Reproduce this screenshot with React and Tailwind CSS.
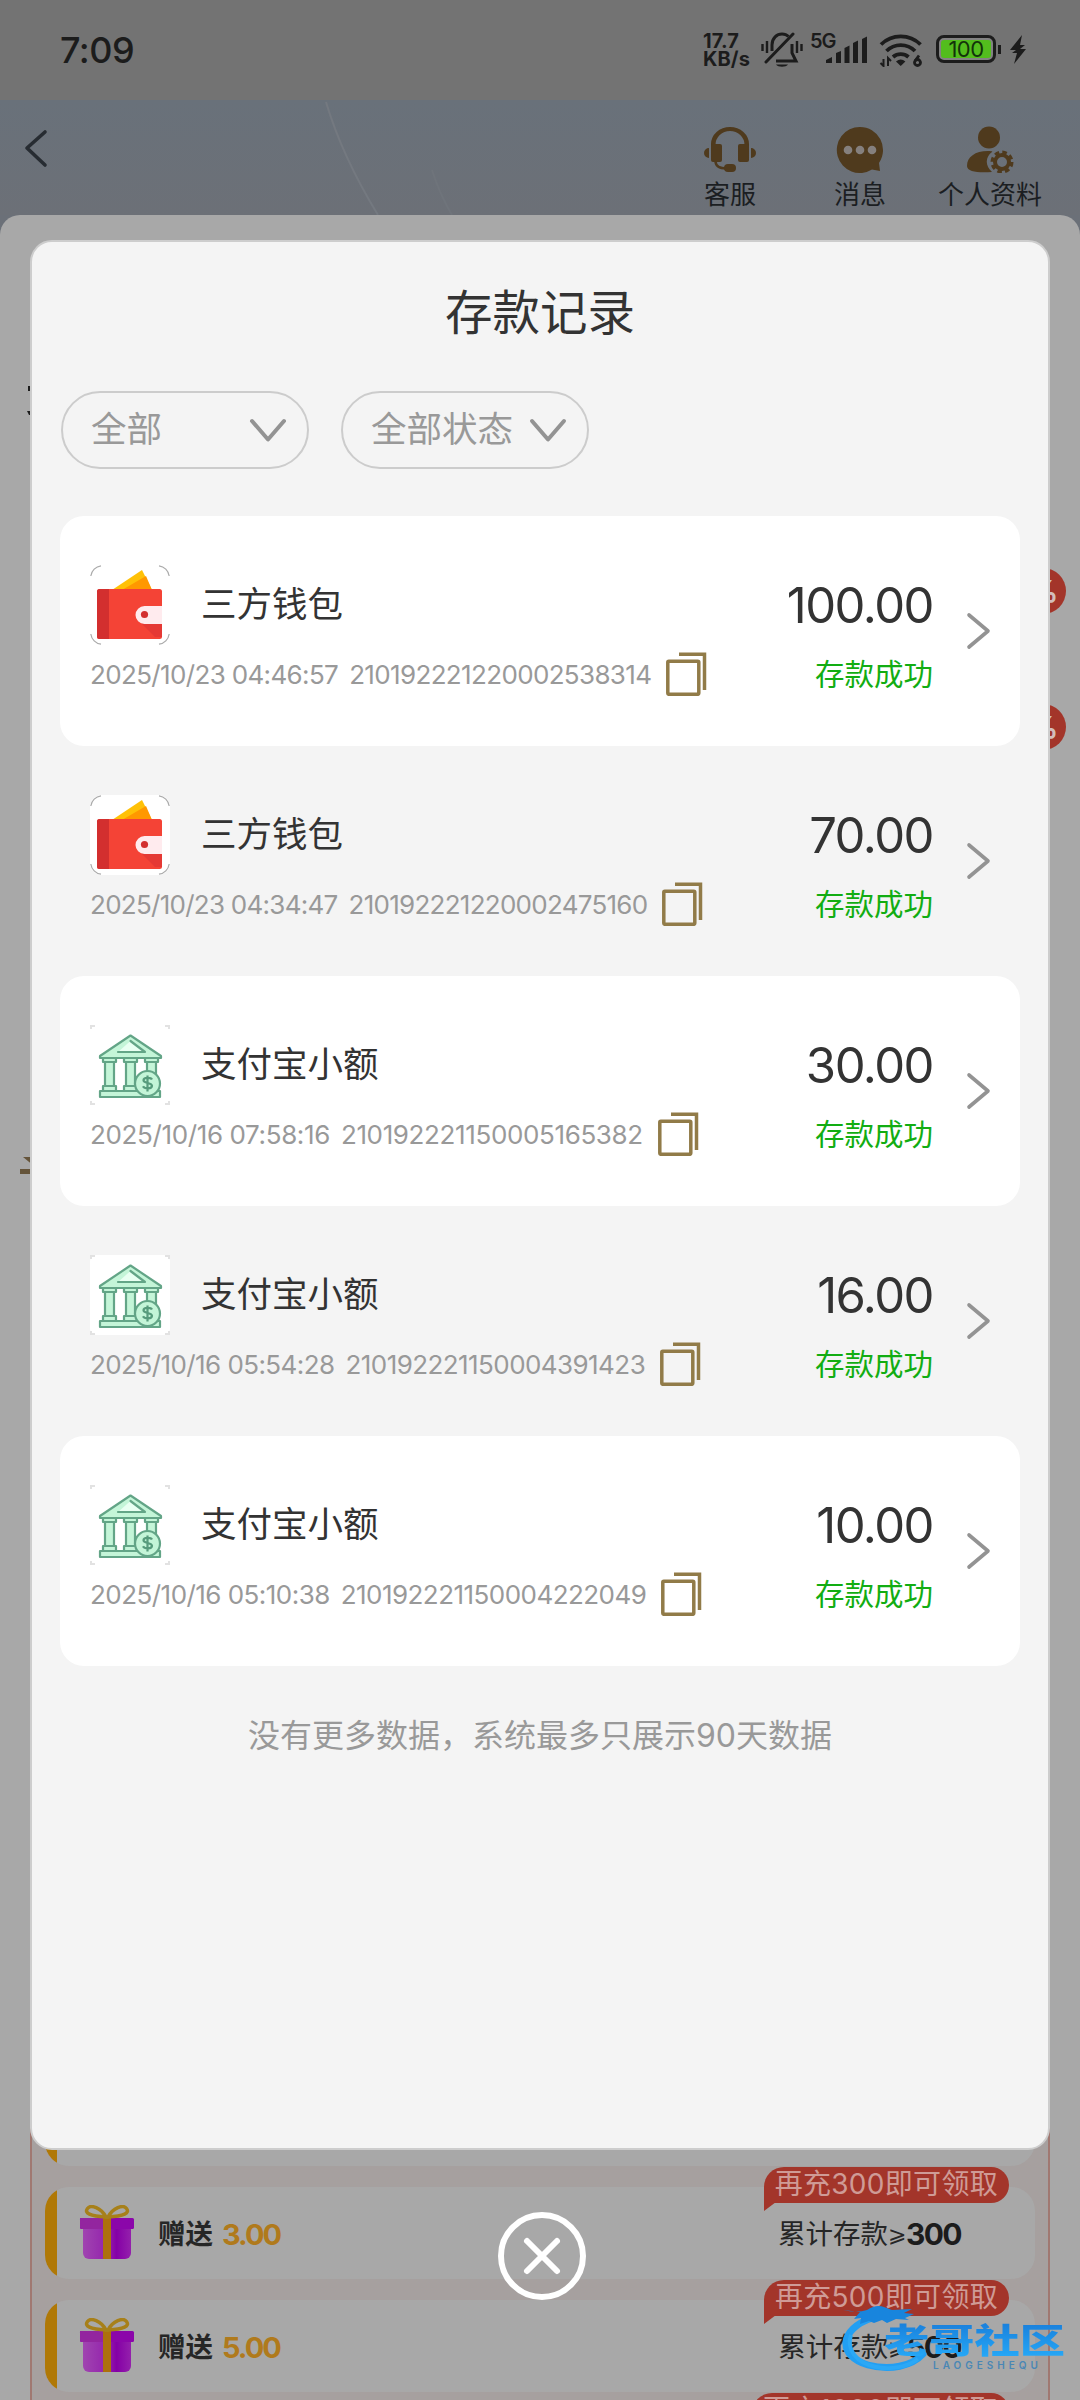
import React, { useState } from "react";

const records = [
  { type: "wallet", name: "三方钱包", time: "2025/10/23 04:46:57", order: "210192221220002538314", amount: "100.00", tracking: "tracking-[-0.65px]" },
  { type: "wallet", name: "三方钱包", time: "2025/10/23 04:34:47", order: "210192221220002475160", amount: "70.00", tracking: "tracking-[-0.73px]" },
  { type: "bank", name: "支付宝小额", time: "2025/10/16 07:58:16", order: "210192221150005165382", amount: "30.00", tracking: "tracking-[-0.37px]" },
  { type: "bank", name: "支付宝小额", time: "2025/10/16 05:54:28", order: "210192221150004391423", amount: "16.00", tracking: "tracking-[-0.57px]" },
  { type: "bank", name: "支付宝小额", time: "2025/10/16 05:10:38", order: "210192221150004222049", amount: "10.00", tracking: "tracking-[-0.54px]" },
];

const bonuses = [
  { id: 1, gift: "", need: "" },
  { id: 2, gift: "3.00", need: "300" },
  { id: 3, gift: "5.00", need: "500" },
  { id: 4, gift: "", need: "1000" },
];

function WalletIcon() {
  return (
    <svg width="80" height="80" viewBox="0 0 80 80">
      <rect width="80" height="80" rx="12" fill="#fff" />
      <g fill="none" stroke="#aaa" strokeWidth="1.2">
        <path d="M.8 11A12 12 0 0 1 11 .8" />
        <path d="M69 .8A12 12 0 0 1 79.2 11" />
        <path d="M79.2 69A12 12 0 0 1 69 79.2" />
        <path d="M11 79.2A12 12 0 0 1 .8 69" />
      </g>
      <path d="M22 25 52 5l10 20z" fill="#ffc107" />
      <path d="M32 25 56 11l6 14z" fill="#ff9800" />
      <rect x="7" y="24" width="65" height="50" rx="2.5" fill="#f44336" />
      <path d="M9.500 24H19v50H9.500A2.500 2.500 0 0 1 7 71.500v-45A2.500 2.500 0 0 1 9.500 24z" fill="#d32f2f" />
      <path d="M51 58l14 14h7V58z" fill="#e53935" />
      <path d="M72 41H54.500a9 9 0 0 0 0 18H72z" fill="#ffebee" />
      <circle cx="54.500" cy="49.500" r="3.600" fill="#d32f2f" />
    </svg>
  );
}

function BankIcon() {
  return (
    <svg width="80" height="80" viewBox="0 0 80 80">
      <rect width="80" height="80" rx="6" fill="#fff" />
      <g stroke="#e2e2e2" strokeWidth="2" fill="none">
        <path d="M1 4V1h4M75 1h4v3M79 76v3h-4M5 79H1v-3" />
      </g>
      <g fill="#c4f5d8" stroke="#63a587" strokeWidth="2.200" strokeLinejoin="round" strokeLinecap="round">
        <path d="M40.500 10.500 71 31v2H10v-2z" />
        <path d="M28 27h27L40.500 16" fill="#e9fff2" />
        <path d="M15 37h9v24h-9zM36 37h9v24h-9zM57 37h9v20h-9z" />
        <path d="M13 33h13v4H13zM34 33h13v4H34zM55 33h13v4H55z" />
        <path d="M13 61h13v5H13zM34 61h13v5H34z" />
        <path d="M10 66h60v6H10z" />
        <circle cx="57.500" cy="58.500" r="12.500" />
      </g>
      <path d="M62 54.500c-1-2-8.500-2.500-8.500.8s8.500 2 8.500 5.500-7.500 3.300-9 .5M57.500 50.500v16" fill="none" stroke="#579b7c" strokeWidth="2.200" />
    </svg>
  );
}

function CopyIcon() {
  return (
    <svg width="41" height="44" viewBox="0 0 41 44" fill="none" stroke="#917b48" strokeWidth="3.500">
      <rect x="1.800" y="9.300" width="31" height="33" rx="1" />
      <path d="M13 2.200h25.500V38" />
    </svg>
  );
}

function GiftIcon() {
  return (
    <svg width="56" height="56" viewBox="0 0 56 56">
      <defs>
        <linearGradient id="giftBox">
          <stop offset="0" stopColor="#a045b0" />
          <stop offset=".5" stopColor="#9423ad" />
          <stop offset=".7" stopColor="#8500a6" />
          <stop offset="1" stopColor="#9420ac" />
        </linearGradient>
      </defs>
      <path d="M4 22h48v26a6 6 0 0 1-6 6H10a6 6 0 0 1-6-6z" fill="url(#giftBox)" />
      <rect x="1" y="13" width="54" height="11" rx="1.500" fill="#8b06aa" />
      <path d="M1 13h23v11H3a2 2 0 0 1-2-2z" fill="#93259f" />
      <path d="M24 12h8v42h-8z" fill="#ad700d" />
      <g fill="none" stroke="#a7801a" strokeWidth="3.500">
        <path d="M27 12C22 3 12-1 8.500 3.500S11 11 27 12z" />
        <path d="M29 12C34 3 44-1 47.500 3.500S45 11 29 12z" />
      </g>
    </svg>
  );
}

function StatusBar() {
  return (
    <div className="flex h-[100px] items-start bg-[#737373] pl-[60px] text-[#1c1c1c]">
      <div className="mt-[29px] w-[643px] text-[36px] leading-[42px] font-medium tracking-[-0.5px]">7:09</div>
      <div className="mt-[32px] w-[58px] text-[20px] leading-[18px] font-bold tracking-[0.1px]">
        <div>17.7</div>
        <div>KB/s</div>
      </div>
      <svg className="mt-[32px]" width="42" height="36" viewBox="0 0 42 36" fill="none" stroke="currentColor" strokeWidth="3">
        <path d="M5 30 32 2" strokeLinecap="round" />
        <path d="M11 19v-6c0-7 5-11 10-11 3 0 5 1 6.500 2.500M31 12v9l4 8H15" />
        <path d="M15 32.500h12c-2 3-10 3-12 0z" fill="currentColor" stroke="none" />
        <path d="M1.500 12v7M6 9v12M36 9v12M40.500 12v7" strokeWidth="2.400" />
      </svg>
      <div className="mt-[31px] ml-[7px] w-[16px] text-[20px] leading-[20px] font-semibold tracking-[-1px]">5G</div>
      <svg className="mt-[36px]" width="42" height="28" viewBox="0 0 42 28" fill="currentColor">
        <path d="M0 27v-3l6-3v6zM10 27V17l5-2v12zM18.500 27V12l5-2.500V27zM27 27V7l5-2.500V27zM36 27V3l5-2.500V27z" />
      </svg>
      <svg className="mt-[33px] ml-[11px]" width="44" height="34" viewBox="0 0 44 34" fill="none" stroke="currentColor" strokeWidth="3.800">
        <path d="M2 11.500a28 28 0 0 1 39.500 0M7.500 18a20 20 0 0 1 28.500 0M14 24a12 12 0 0 1 15.500 0" />
        <path d="M17 28.500q4.700-4 9.400 0l-4.700 4.500z" fill="currentColor" stroke="none" />
        <path d="M4.500 26v7l-3-3M9 33v-8l3 3" strokeWidth="2" />
        <path d="M40 22.500l-4 5.500" strokeWidth="2.800" />
        <circle cx="38.500" cy="29.500" r="3" strokeWidth="2.800" />
      </svg>
      <div className="mt-[35px] ml-[13px] flex h-[28px] w-[60px] items-center justify-center rounded-[8px] border-[3px] border-[#1c1c1c] bg-[#828282] p-[2px]">
        <div className="flex h-full w-full items-center justify-center rounded-[3px] bg-[#53bd1d] text-[22px] leading-none tracking-[-0.5px] text-[#12330a]">100</div>
      </div>
      <div className="mt-[45px] ml-[2px] h-[9px] w-[3px] bg-[#1c1c1c]"></div>
      <svg className="mt-[35px] ml-[9px]" width="17" height="30" viewBox="0 0 17 30" fill="currentColor">
        <path d="M12 0 0 15h6l-4 3h5l-3 11 12-15h-6l5-4h-5z" />
      </svg>
    </div>
  );
}

function Header() {
  return (
    <div className="relative flex h-[115px] justify-between">
      <svg className="absolute top-0 left-[320px]" width="140" height="115" viewBox="0 0 140 115" fill="none" stroke="#747980" strokeWidth="2">
        <path d="M6 2Q22 56 58 115" />
        <path d="M112 70q8 25 20 45" stroke="#6f747b" />
      </svg>
      <svg className="mt-[28px] ml-[23px]" width="26" height="40" viewBox="0 0 26 40" fill="none" stroke="#272c32" strokeWidth="3.600" strokeLinecap="round" strokeLinejoin="round">
        <path d="M22 4 4 20l18 17" />
      </svg>
      <div className="flex pt-[26px] text-center text-[26px] leading-[36px] text-[#1b1e22]">
        <div className="mr-[78px] flex flex-col items-center">
          <svg width="52" height="47" viewBox="0 0 52 47" fill="#4f3a1d">
            <path d="M7 22V18a19 17 0 0 1 38 0v4h-4.500V19a14.500 14 0 0 0-29 0v3z" />
            <rect x="7" y="18" width="11" height="18" rx="2" />
            <rect x="34" y="18" width="11" height="18" rx="2" />
            <path d="M5 22v10a5 5 0 0 1 0-10zM47 22v10a5 5 0 0 0 0-10z" />
            <path d="M11.500 35c0 5 3 7.500 11 7.500" fill="none" stroke="#4f3a1d" strokeWidth="2.500" />
            <rect x="20" y="38" width="12" height="8" rx="4" />
          </svg>
          <span className="mt-[4px]">客服</span>
        </div>
        <div className="mr-[52px] flex flex-col items-center">
          <svg width="48" height="47" viewBox="0 0 48 47">
            <path d="M24 1a23 23 0 1 0 12 42.500L44 45l-1-8A23 23 0 0 0 24 1z" fill="#4f3a1d" />
            <g fill="#85807e">
              <circle cx="12" cy="24" r="4.300" />
              <circle cx="24" cy="24" r="4.300" />
              <circle cx="36" cy="24" r="4.300" />
            </g>
          </svg>
          <span className="mt-[4px]">消息</span>
        </div>
        <div className="mr-[38px] flex flex-col items-center">
          <svg width="48" height="47" viewBox="0 0 48 47" fill="#4f3a1d">
            <circle cx="23" cy="11.500" r="11" />
            <path d="M1 40c0-9 8-15 21-15 3 0 5 .3 4 1-7 5-7 14 0 20-13 1-25 0-25-6z" />
            <circle cx="36" cy="36" r="7" fill="none" stroke="#4f3a1d" strokeWidth="4" />
            <circle cx="36" cy="36" r="9.500" fill="none" stroke="#4f3a1d" strokeWidth="4" strokeDasharray="4.400 3.062" />
          </svg>
          <span className="mt-[4px]">个人资料</span>
        </div>
      </div>
    </div>
  );
}

function BonusRow({ gift, need }) {
  return (
    <div className="relative mb-[21px] ml-[13px] flex h-[92px] w-[990px] shrink-0 items-center rounded-[24px] bg-[#a8a8a8]">
      <div className="h-[92px] w-[12px] overflow-hidden">
        <div className="h-full w-[60px] rounded-[24px] bg-[#b07806]"></div>
      </div>
      {gift && (
        <>
          <div className="ml-[22px]">
            <GiftIcon />
          </div>
          <div className="mt-[3px] ml-[23px] flex items-center text-[27.5px] font-bold text-[#262626]">
            赠送
            <span className="ml-[9px] text-[29px] tracking-[-2px] text-[#b07a1c]">{gift}</span>
          </div>
          <div className="mt-[3px] mr-[74px] ml-auto flex items-center text-[27.5px] text-[#262626]">
            累计存款
            <span className="w-[18px] text-center text-[22px]">⩾</span>
            <b className="text-[30px] tracking-[-1.6px] text-[#1c1c1c]">{need}</b>
          </div>
        </>
      )}
      {need && (
        <div className="absolute -top-[20px] right-[26px] h-[36px] rounded-tl-[20px] rounded-r-[18px] bg-[#a3352a] px-[11px] text-[28px] leading-[34px] tracking-[0.3px] whitespace-nowrap text-[#cf9b96]">
          再充{need}即可领取
          <svg className="absolute top-[35px] left-0" width="12" height="9" viewBox="0 0 12 9" fill="#a3352a">
            <path d="M0 0h12L0 9z" />
          </svg>
        </div>
      )}
    </div>
  );
}

function PercentTag({ className }) {
  return (
    <div className={"mr-[14px] flex size-[46px] shrink-0 items-center justify-center self-end rounded-full bg-[#a3352a] text-[30px] font-bold text-[#d3bdbb] " + className}>
      %
    </div>
  );
}

function Filter({ label }) {
  return (
    <button className="flex h-[78px] w-[248px] items-center justify-between rounded-full border-2 border-[#ccc] pr-[20px] pl-[28px] text-[35.500px] text-[#999]">
      <span>{label}</span>
      <svg width="38" height="25" viewBox="0 0 38 25" fill="none" stroke="#939393" strokeWidth="4" strokeLinecap="round" strokeLinejoin="round">
        <path d="M3 3l16 18.500L35 3" />
      </svg>
    </button>
  );
}

function Record({ item, index }) {
  return (
    <div className={"flex h-[230px] items-center rounded-[24px] pr-[29px] pl-[30px] " + (index % 2 === 0 ? "bg-white" : "")}>
      <div className="-mt-[1px] flex flex-1 flex-col">
        <div className="flex h-[80px] items-center">
          {item.type === "wallet" ? <WalletIcon /> : <BankIcon />}
          <span className="ml-[31px] text-[35.500px] text-[#333]">{item.name}</span>
        </div>
        <div className={"mt-[7px] flex h-[44px] items-center text-[26px] whitespace-nowrap text-[#999] " + item.tracking}>
          <span>{item.time}</span>
          <span className="mr-[15px] ml-[11px]">{item.order}</span>
          <CopyIcon />
        </div>
      </div>
      <div className="-mt-[1px] flex flex-col items-end">
        <span className="h-[80px] text-[49px] leading-[80px] tracking-[-1.500px] text-[#333]">{item.amount}</span>
        <span className="mt-[6px] text-[29.500px] leading-[44px] text-[#12ad12]">存款成功</span>
      </div>
      <svg className="ml-[33px]" width="25" height="40" viewBox="0 0 25 40" fill="none" stroke="#939393" strokeWidth="3.600" strokeLinecap="round" strokeLinejoin="round">
        <path d="M3 4l19 16L3 36" />
      </svg>
    </div>
  );
}

function Watermark() {
  return (
    <div className="absolute top-[2305px] left-[842px] flex">
      <svg width="92" height="70" viewBox="0 0 92 70" fill="none">
        <path d="M30 13C-3 24-5 51 26 60c22 6 44 1 55-11" stroke="#229ff3" strokeWidth="7" strokeLinecap="round" />
        <path d="M9 30C4 44 14 58 34 62c14 3 32 0 42-8" stroke="#2ba8f6" strokeWidth="4" />
        <path d="M1 5q14 3 24 0Q34-1 42 2l8 3 20-1-8 4 10 1-9 4 4 2-13-1-9 4-5-3-8 3-5-2-9 3 1-6-7 1 6-7z" fill="#1885dd" />
      </svg>
      <div className="-ml-[50px] pt-[18px]">
        <div className="origin-left scale-x-[1.33] bg-linear-to-b from-[#1a80dc] to-[#27aaf8] bg-clip-text text-[34px] leading-[36px] font-black whitespace-nowrap text-transparent">老哥社区</div>
        <div className="ml-[49px] text-[10px] leading-[12px] font-semibold tracking-[4px] text-[#4a87b5]">LAOGESHEQU</div>
      </div>
    </div>
  );
}

function App() {
  const [open, setOpen] = useState(true);

  return (
    <div className="relative h-[2400px] w-[1080px] overflow-hidden font-['Inter','Noto_Sans_CJK_SC',sans-serif]">
      {/* Page behind the dialog */}
      <div className="flex h-full flex-col bg-[#6b7078]">
        <StatusBar />
        <div className="bg-linear-to-b from-[#69717a] to-[#6c7077]">
          <Header />
        </div>
        <div className="flex flex-1 flex-col overflow-hidden rounded-t-[20px] bg-[#a8a8a8]">
          <svg className="mt-[170px] ml-[27px] shrink-0" width="8" height="32" viewBox="0 0 8 32" fill="#1c1c1c">
            <path d="M1 1h7v5H1zM0 26h8v4H2z" />
          </svg>
          <PercentTag className="mt-[151px]" />
          <PercentTag className="mt-[90px]" />
          <svg className="mt-[407px] ml-[20px] shrink-0" width="14" height="17" viewBox="0 0 14 17" fill="#65543a">
            <path d="M3 0h11v9zM0 12h14v5H0z" />
          </svg>
          <div className="mx-[30px] mt-[890px] flex flex-col border-x-2 border-[#a07871] bg-[#a6a09f] pt-[10px]">
            {bonuses.map((item) => (
              <BonusRow key={item.id} gift={item.gift} need={item.need} />
            ))}
          </div>
        </div>
      </div>

      {/* Deposit record dialog */}
      {open && (
        <div className="absolute inset-0 flex flex-col items-center pt-[240px]">
          <div className="flex h-[1910px] w-[1020px] flex-col rounded-[22px] border-2 border-[#cdcdcd] bg-[#f4f4f4] px-[28px]">
            <h1 className="mt-[35px] text-center text-[47.500px] leading-[72px] text-[#333]">存款记录</h1>
            <div className="mt-[42px] flex gap-[32px] pl-[1px]">
              <Filter label="全部" />
              <Filter label="全部状态" />
            </div>
            <div className="mt-[47px] flex flex-col">
              {records.map((item, index) => (
                <Record key={item.order} item={item} index={index} />
              ))}
            </div>
            <p className="mt-[48px] text-center text-[32px] leading-[44px] text-[#999]">没有更多数据，系统最多只展示90天数据</p>
          </div>
          <button className="mt-[62px] ml-[4px]" onClick={() => setOpen(false)}>
            <svg width="88" height="88" viewBox="0 0 88 88" fill="none" stroke="#fff" strokeWidth="6" strokeLinecap="round">
              <circle cx="44" cy="44" r="41" />
              <path d="M29 29l30 30M59 29 29 59" />
            </svg>
          </button>
        </div>
      )}

      <Watermark />
    </div>
  );
}

export default App;
